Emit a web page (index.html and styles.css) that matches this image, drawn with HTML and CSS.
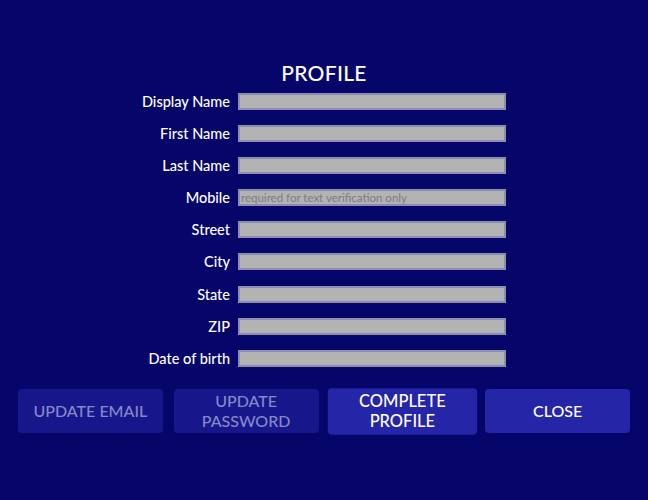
FILE: index.html
```html
<!DOCTYPE html>
<html lang="en">
<head>
<meta charset="utf-8">
<title>Profile</title>
<link rel="stylesheet" href="styles.css">
</head>
<body>
<main class="page">
  <h1 class="title">PROFILE</h1>
  <form class="form">
    <label class="label" for="f1">Display Name</label><input class="field" id="f1" type="text">
    <label class="label" for="f2">First Name</label><input class="field" id="f2" type="text">
    <label class="label" for="f3">Last Name</label><input class="field" id="f3" type="text">
    <label class="label" for="f4">Mobile</label><input class="field" id="f4" type="text" placeholder="required for text verification only">
    <label class="label" for="f5">Street</label><input class="field" id="f5" type="text">
    <label class="label" for="f6">City</label><input class="field" id="f6" type="text">
    <label class="label" for="f7">State</label><input class="field" id="f7" type="text">
    <label class="label" for="f8">ZIP</label><input class="field" id="f8" type="text">
    <label class="label" for="f9">Date of birth</label><input class="field" id="f9" type="text">
  </form>
  <div class="actions">
    <button class="btn btn-muted" type="button">UPDATE EMAIL</button>
    <button class="btn btn-muted" type="button">UPDATE<br>PASSWORD</button>
    <button class="btn btn-primary btn-focus" type="button">COMPLETE<br>PROFILE</button>
    <button class="btn btn-primary" type="button">CLOSE</button>
  </div>
</main>
</body>
</html>
```
FILE: styles.css
```css
html, body {
  margin: 0;
  height: 100%;
  background: #06066a;
}
body {
  font-family: "Lato", "Noto Sans", sans-serif;
  color: #ffffff;
}
.page {
  padding-top: 60px;
}
.title {
  margin: 0 0 7px;
  text-align: center;
  font-size: 21px;
  line-height: 26px;
  font-weight: 500;
  letter-spacing: 0.3px;
}
.form {
  display: grid;
  grid-template-columns: 230px 268px;
  column-gap: 8px;
  row-gap: 15.1px;
  align-items: center;
}
.label {
  text-align: right;
  font-size: 14.5px;
  line-height: 17px;
  font-weight: 500;
  white-space: nowrap;
}
.field {
  box-sizing: border-box;
  width: 268px;
  height: 17px;
  margin: 0;
  padding: 0 1px;
  background: #b3b3b3;
  border: 2px solid #8d8db0;
  border-radius: 0;
  font-family: inherit;
  font-size: 11.5px;
  color: #333;
  outline: none;
}
.field::placeholder {
  color: #7c7c84;
}
.actions {
  display: flex;
  gap: 11px;
  padding: 22px 18px 0;
}
.btn {
  flex: 1;
  height: 44.5px;
  border: none;
  border-radius: 4px;
  font-family: inherit;
  font-size: 16px;
  line-height: 20px;
  font-weight: 500;
  padding: 0;
}
.btn-muted {
  background: #17178b;
  color: #8888c8;
}
.btn-primary {
  background: #2525a8;
  color: #ffffff;
}
.btn-focus {
  transform: scale(1.03);
}
```
